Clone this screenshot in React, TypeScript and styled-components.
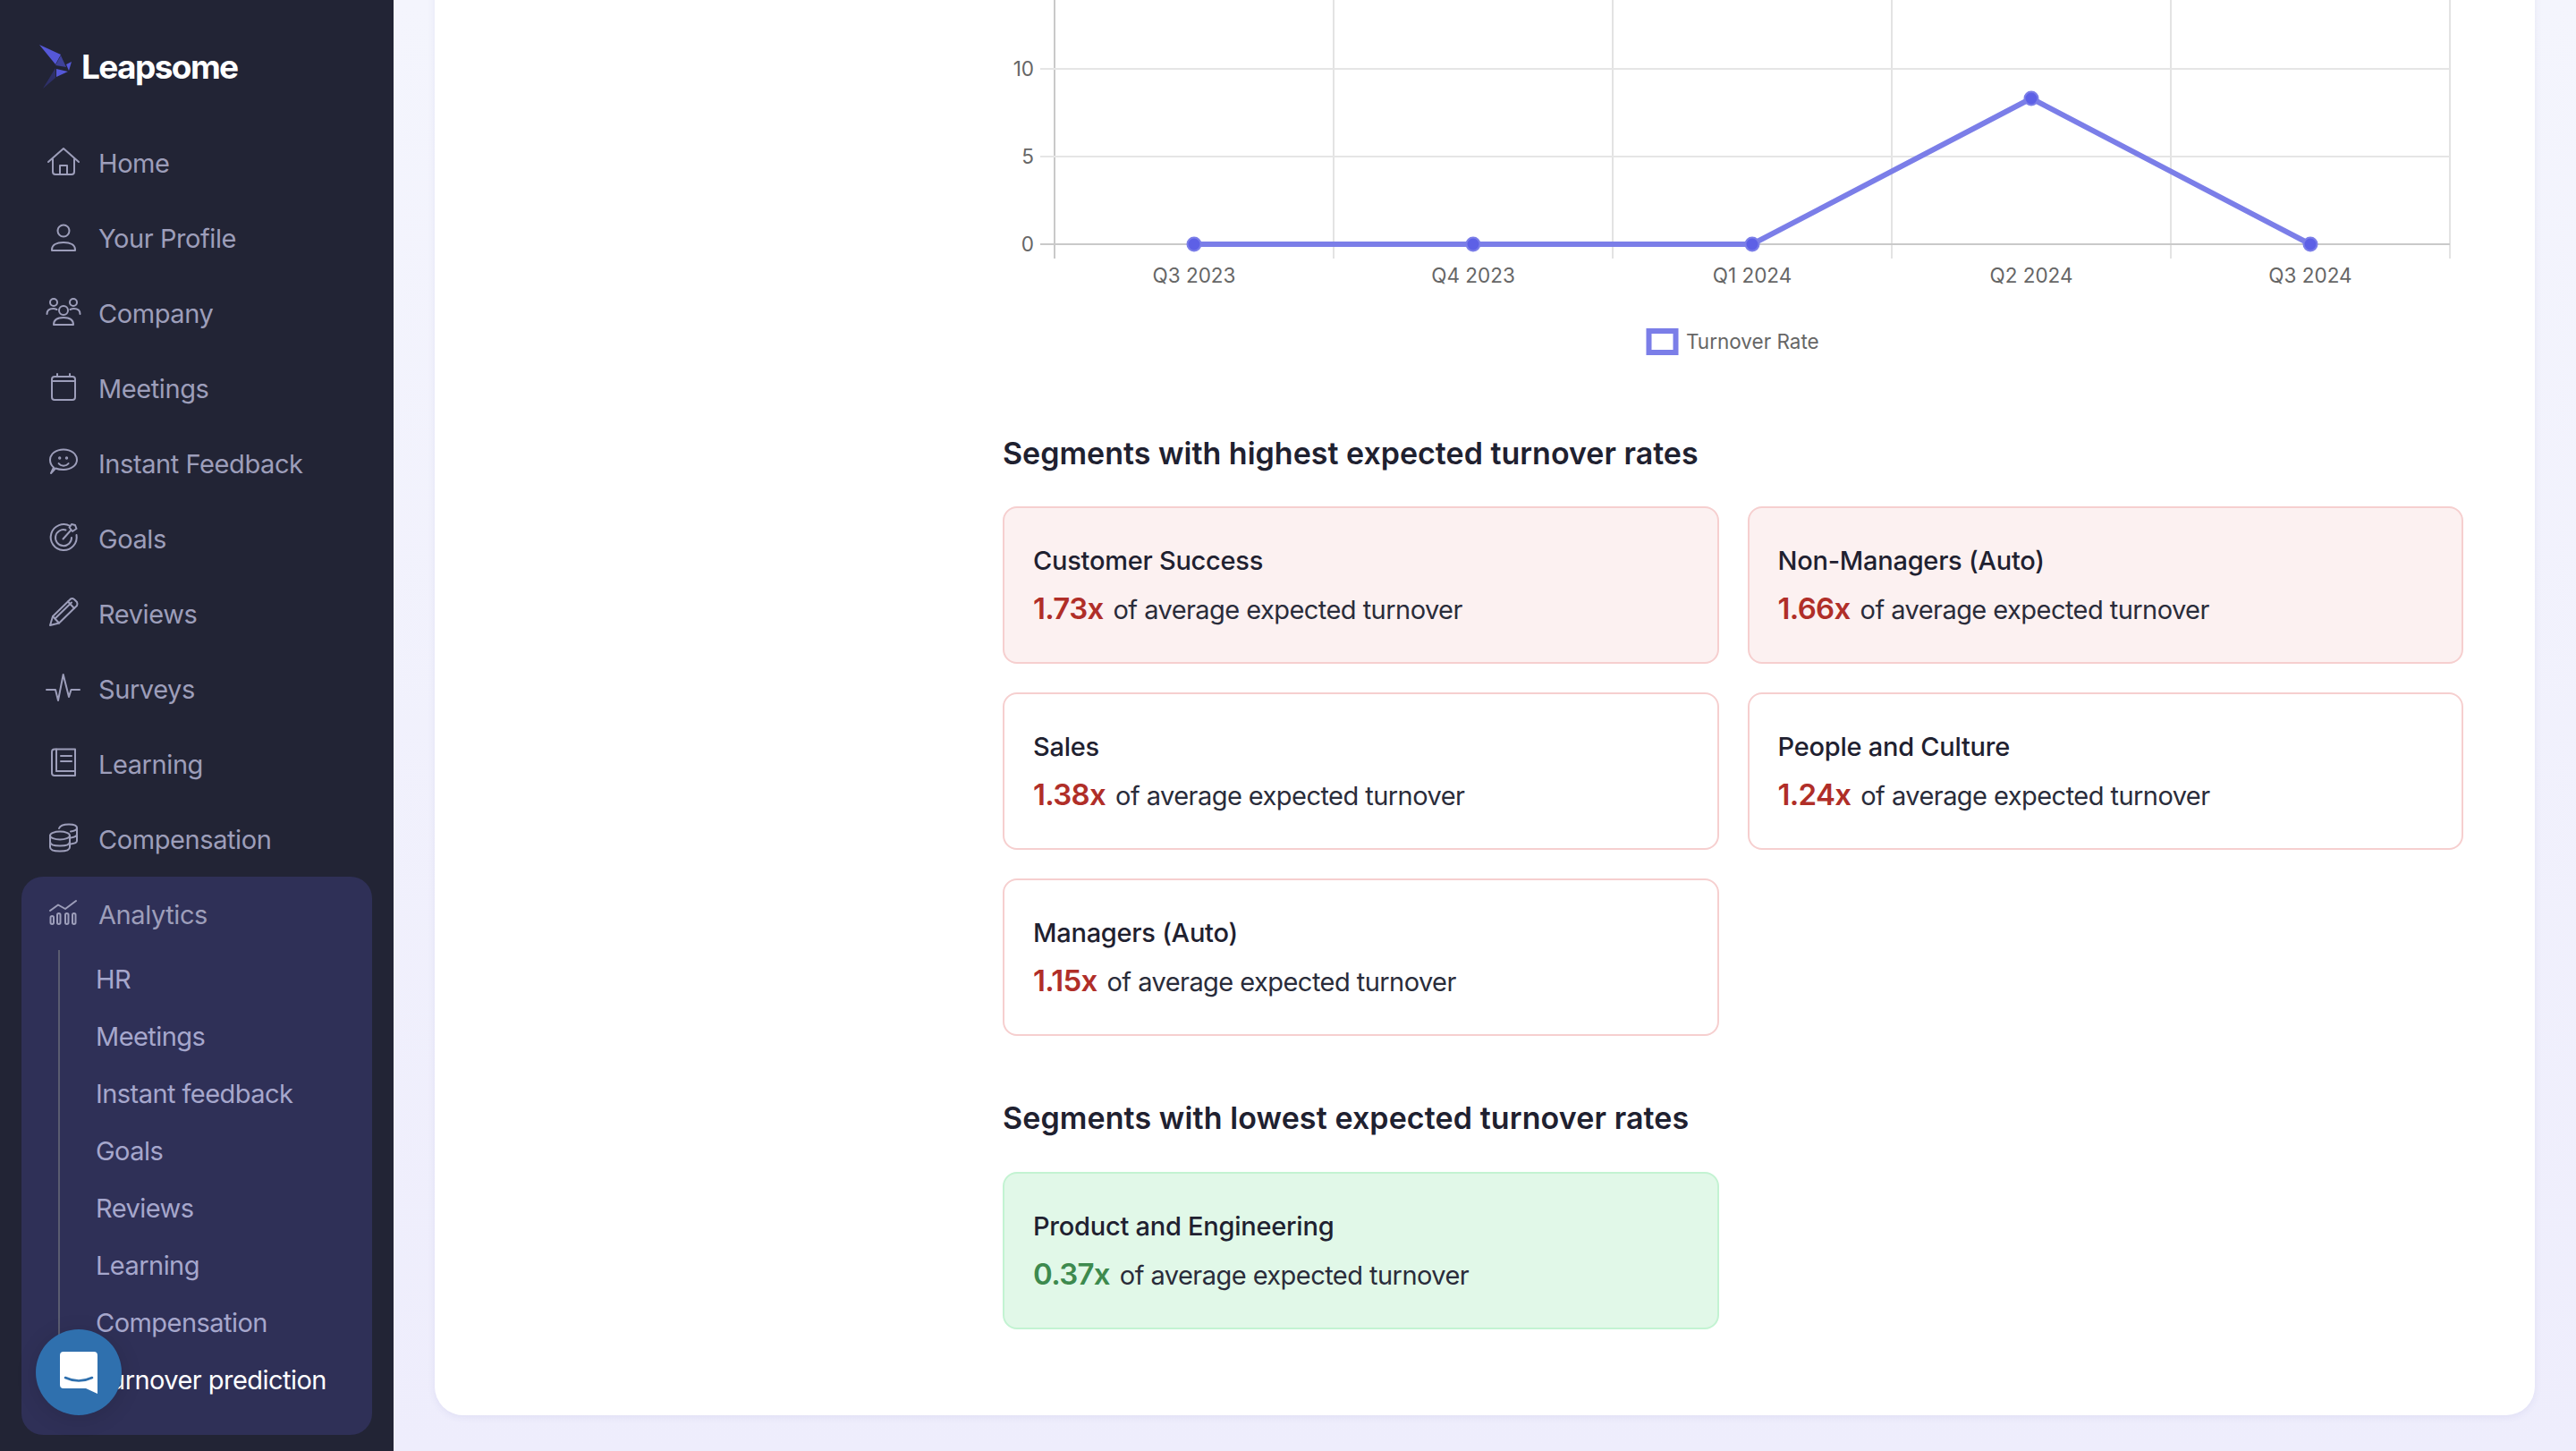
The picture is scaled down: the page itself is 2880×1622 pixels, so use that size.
import React from "react";
import styled, { createGlobalStyle } from "styled-components";

const FONT = `"Inter", "Liberation Sans", sans-serif`;

const Global = createGlobalStyle`
  html, body { margin: 0; padding: 0; height: 100%; }
  #root { height: 100vh; overflow: hidden; }
  * { box-sizing: border-box; }
  body { font-family: ${FONT}; }
`;

const Page = styled.div`
  display: flex;
  height: 100%;
  background: linear-gradient(180deg, #f4f5fd 0%, #eeedfc 100%);
`;

const Sidebar = styled.aside`
  position: relative;
  width: 440px;
  flex: none;
  background: #222435;
  padding: 0 24px;
`;

const LogoRow = styled.div`
  height: 140px;
  display: flex;
  align-items: flex-start;
  padding: 48px 0 0 18px;
  gap: 9px;
`;

const LogoWord = styled.span`
  color: #fff;
  font-size: 37px;
  font-weight: 700;
  line-height: 54px;
  letter-spacing: -1.6px;
`;

const NavRow = styled.div`
  height: 84px;
  display: flex;
  align-items: center;
  gap: 21px;
  padding-left: 27px;
  color: #9d9eba;
  font-size: 29px;
  letter-spacing: -0.42px;
`;

const Panel = styled.div`
  margin-top: 1px;
  height: 624px;
  background: #2f3057;
  border-radius: 24px;
`;

const PanelHead = styled(NavRow)`
  margin-top: -1px;
`;

const SubList = styled.div`
  margin: -2px 0 0 41px;
  border-left: 2px solid #5a5c70;
  padding-left: 40px;
`;

const SubItem = styled.div<{ $active?: boolean }>`
  height: 64px;
  display: flex;
  align-items: center;
  color: ${(p) => (p.$active ? "#ffffff" : "#a6a7cc")};
  font-size: 29px;
  letter-spacing: -0.55px;
  white-space: nowrap;
`;

const ChatBubble = styled.div`
  position: absolute;
  left: 40px;
  bottom: 40px;
  width: 96px;
  height: 96px;
  border-radius: 50%;
  background: #2f70ae;
  box-shadow: 0 4px 24px rgba(0, 0, 0, 0.12);
  display: flex;
  align-items: center;
  justify-content: center;
`;

const Main = styled.main`
  flex: 1;
  min-width: 0;
  height: 100%;
  display: flex;
  flex-direction: column;
  justify-content: flex-end;
  padding: 0 46px 40px;
`;

const Card = styled.section`
  flex: none;
  background: #fff;
  border-radius: 32px;
  box-shadow: 0 2px 8px rgba(70, 70, 150, 0.08);
  padding: 60px 80px 96px 635px;
`;

const Chart = styled.svg`
  display: block;
  width: 1633px;
  height: 485px;
`;

const Heading = styled.h2<{ $above?: number; $below: number; $spacing?: number }>`
  margin: ${(p) => p.$above ?? 0}px 0 ${(p) => p.$below}px;
  height: 44px;
  line-height: 44px;
  font-size: 34px;
  font-weight: 600;
  color: #1f2130;
  letter-spacing: ${(p) => p.$spacing ?? 0}px;
`;

const Grid = styled.div`
  display: grid;
  grid-template-columns: 1fr 1fr;
  gap: 32px;
`;

const tones = {
  strong: { bg: "#fcf1f1", border: "#f6cfcf", value: "#b02e28" },
  plain: { bg: "#ffffff", border: "#f6cfcf", value: "#b02e28" },
  good: { bg: "#e1f8e8", border: "#c3f3d2", value: "#3d8a4e" },
};
type Tone = keyof typeof tones;

const Segment = styled.div<{ $tone: Tone }>`
  height: 176px;
  border-radius: 16px;
  border: 2px solid ${(p) => tones[p.$tone].border};
  background: ${(p) => tones[p.$tone].bg};
  padding: 0 32px;
  display: flex;
  flex-direction: column;
  justify-content: center;
  gap: 13px;
`;

const SegmentTitle = styled.div`
  font-size: 29px;
  line-height: 40px;
  font-weight: 500;
  color: #1f2130;
  letter-spacing: -0.25px;
`;

const SegmentLine = styled.div`
  font-size: 29px;
  line-height: 40px;
  color: #2a2c3a;
  letter-spacing: -0.55px;
`;

const SegmentValue = styled.span<{ $tone: Tone }>`
  font-size: 33px;
  font-weight: 600;
  letter-spacing: -0.7px;
  color: ${(p) => tones[p.$tone].value};
  margin-right: 11px;
`;

const Icon = styled.svg`
  width: 38px;
  height: 38px;
  flex: none;
  overflow: visible;
  fill: none;
  stroke: #9d9eba;
  stroke-width: 2;
  stroke-linecap: round;
  stroke-linejoin: round;
`;

const icons: Record<string, React.ReactNode> = {
  home: (
    <>
      <path d="M3 18 L20 3 L37 18" />
      <path d="M8 15 V29 a3 3 0 0 0 3 3 H29 a3 3 0 0 0 3 -3 V15" />
      <path d="M16 32 V22 H24 V32" />
    </>
  ),
  user: (
    <>
      <circle cx="20" cy="11" r="6.5" />
      <path d="M7 33 v-1 c0 -5 5 -8 13 -8 s13 3 13 8 v1 z" />
    </>
  ),
  company: (
    <>
      <circle cx="9" cy="7" r="4" />
      <circle cx="31" cy="7" r="4" />
      <circle cx="20" cy="16" r="5" />
      <path d="M1.5 20 c0 -4 3 -6 7 -6 c2 0 3 .5 4 1" />
      <path d="M38.5 20 c0 -4 -3 -6 -7 -6 c-2 0 -3 .5 -4 1" />
      <path d="M9 32 c0 -6 4 -8 11 -8 s11 2 11 8 z" />
    </>
  ),
  calendar: (
    <>
      <rect x="7" y="6" width="26" height="26" rx="3" />
      <path d="M7 11 H33 M13 3 V6 M27 3 V6" />
    </>
  ),
  chat: (
    <>
      <path d="M6 30 L9 23.5 C6.5 21.5 5 18.5 5 15 C5 8.5 11.5 3.5 20 3.5 C28.5 3.5 35 8.5 35 15 C35 21 28.5 26 20 26 C16.5 26 13.5 25.5 11 24.5 L6 30 Z" />
      <circle cx="15.7" cy="13" r="0.7" />
      <circle cx="23.5" cy="13" r="0.7" />
      <path d="M14.6 19 C17 22.5 23 22.5 25.6 19" />
    </>
  ),
  goal: (
    <>
      <path d="M27.5 5 A14.5 14.5 0 1 0 34.5 15" />
      <path d="M22.5 9.5 A9 9 0 1 0 29 18" />
      <path d="M19.5 19.5 L28 10" />
      <path d="M26.5 6.5 L29 3 L33 4 L34.5 8 L30 11 Z" />
    </>
  ),
  pencil: (
    <>
      <path d="M5 32 L8 22 L28 2.5 Q30 1.5 32 3 L35 6 Q36 8 35 10 L15 29.5 Z" />
      <path d="M8 22 L15 29.5 M25 5.5 L32 13 M11 24 L29 6.5" />
    </>
  ),
  pulse: <path d="M1 20 H11 L14 32 L19.7 3 L26 28 L28.5 20 H38" />,
  book: (
    <>
      <path d="M12 27 H33 V2.5 H10 Q7 2.5 7 5.5 V29" />
      <path d="M12 2.5 V27 M17 10 H29 M17 16 H29" />
      <path d="M7 29 Q7 32 10 32 H33 M33 27 V32" />
    </>
  ),
  coins: (
    <>
      <ellipse cx="16" cy="15" rx="11" ry="4.5" />
      <path d="M5 15 V28 C5 31 10 32.5 16 32.5 S27 31 27 28 V15" />
      <path d="M5 22 C5 25 10 26.5 16 26.5 S27 25 27 22" />
      <path d="M15 7 C16 4 21 2.5 26 2.5 C32 2.5 35 4 35 6.5 C35 9 32 10 28 10.5" />
      <path d="M35 6.5 V21 C35 23 32 24 28 24.5 M35 13.5 C35 16 32 17 28 17.5" />
    </>
  ),
  analytics: (
    <>
      <path d="M5 15 L14 8.5 L22 13 L34 4" />
      <rect x="5.5" y="21" width="3.5" height="9" rx="1.75" />
      <rect x="13" y="18" width="3.5" height="12" rx="1.75" />
      <rect x="22" y="18" width="3.5" height="12" rx="1.75" />
      <rect x="30" y="18" width="3.5" height="12" rx="1.75" />
    </>
  ),
};

const nav: [string, string][] = [
  ["home", "Home"],
  ["user", "Your Profile"],
  ["company", "Company"],
  ["calendar", "Meetings"],
  ["chat", "Instant Feedback"],
  ["goal", "Goals"],
  ["pencil", "Reviews"],
  ["pulse", "Surveys"],
  ["book", "Learning"],
  ["coins", "Compensation"],
];

const sub = ["HR", "Meetings", "Instant feedback", "Goals", "Reviews", "Learning", "Compensation", "Turnover prediction"];

const xs = [57, 369, 681, 993, 1305, 1617];
const pts: [number, number][] = [
  [213, 273],
  [525, 273],
  [837, 273],
  [1149, 110],
  [1461, 273],
];
const quarters = ["Q3 2023", "Q4 2023", "Q1 2024", "Q2 2024", "Q3 2024"];

const tickStyle = { fontFamily: FONT, fontSize: 22.5, fill: "#666" };

const ChartDrawing = () => (
  <Chart viewBox="-1 0 1633 485">
    {xs.map((x, i) => (
      <line key={x} x1={x} x2={x} y1={0} y2={289} stroke={i === 0 ? "#c9c9c9" : "#e3e3e3"} strokeWidth={2} />
    ))}
    {[77, 175].map((y) => (
      <line key={y} x1={41} x2={1617} y1={y} y2={y} stroke="#e5e5e5" strokeWidth={2} />
    ))}
    <line x1={41} x2={1617} y1={273} y2={273} stroke="#c9c9c9" strokeWidth={2} />
    {[["10", 77], ["5", 175], ["0", 273]].map(([t, y]) => (
      <text key={t} x={34} y={Number(y) + 8} textAnchor="end" style={tickStyle}>
        {t}
      </text>
    ))}
    {pts.map(([x], i) => (
      <text key={x} x={x} y={316} textAnchor="middle" style={tickStyle}>
        {quarters[i]}
      </text>
    ))}
    <polyline points={pts.map((p) => p.join(",")).join(" ")} fill="none" stroke="#7b7ee8" strokeWidth={6} />
    {pts.map(([x, y]) => (
      <circle key={x} cx={x} cy={y} r={7.5} fill="#5d60e6" stroke="#7b7ee8" strokeWidth={2} />
    ))}
    <rect x={721.5} y={370} width={30} height={24} fill="#fff" stroke="#7b7ee8" strokeWidth={6} />
    <text x={763} y={390} style={tickStyle}>
      Turnover Rate
    </text>
  </Chart>
);

const SegmentCard = ({ tone, name, value }: { tone: Tone; name: string; value: string }) => (
  <Segment $tone={tone}>
    <SegmentTitle>{name}</SegmentTitle>
    <SegmentLine>
      <SegmentValue $tone={tone}>{value}</SegmentValue>of average expected turnover
    </SegmentLine>
  </Segment>
);

export default function App() {
  return (
    <Page>
      <Global />
      <Sidebar>
        <LogoRow>
          <svg width="40" height="54" viewBox="42 48 40 54">
            <polygon points="44,50 68,61 62,72" fill="#5558d8" />
            <polygon points="68,62 74,75 62,73" fill="#3f4299" />
            <polygon points="80,69 77,79 74,72" fill="#5558d8" />
            <polygon points="63,77 76,80 63,86" fill="#5558d8" />
            <polygon points="62,76 62,87 48,99" fill="#2e3069" />
          </svg>
          <LogoWord>Leapsome</LogoWord>
        </LogoRow>
        {nav.map(([ic, label]) => (
          <NavRow key={label}>
            <Icon viewBox="0 0 38 38">{icons[ic]}</Icon>
            {label}
          </NavRow>
        ))}
        <Panel>
          <PanelHead>
            <Icon viewBox="0 0 38 38">{icons.analytics}</Icon>
            Analytics
          </PanelHead>
          <SubList>
            {sub.map((s) => (
              <SubItem key={s} $active={s === "Turnover prediction"}>
                {s}
              </SubItem>
            ))}
          </SubList>
        </Panel>
        <ChatBubble>
          <svg width="42" height="47" viewBox="0 0 42 47">
            <path d="M4 0 H38 Q42 0 42 4 V47 L29 41 H4 Q0 41 0 37 V4 Q0 0 4 0 Z" fill="#fff" />
            <path d="M6 29 Q21 36 36 29" fill="none" stroke="#2f70ae" strokeWidth="2.6" strokeLinecap="round" />
          </svg>
        </ChatBubble>
      </Sidebar>
      <Main>
        <Card>
          <ChartDrawing />
          <Heading $below={37}>Segments with highest expected turnover rates</Heading>
          <Grid>
            <SegmentCard tone="strong" name="Customer Success" value="1.73x" />
            <SegmentCard tone="strong" name="Non-Managers (Auto)" value="1.66x" />
            <SegmentCard tone="plain" name="Sales" value="1.38x" />
            <SegmentCard tone="plain" name="People and Culture" value="1.24x" />
            <SegmentCard tone="plain" name="Managers (Auto)" value="1.15x" />
          </Grid>
          <Heading $above={70} $below={38} $spacing={0.1}>Segments with lowest expected turnover rates</Heading>
          <Grid>
            <SegmentCard tone="good" name="Product and Engineering" value="0.37x" />
          </Grid>
        </Card>
      </Main>
    </Page>
  );
}
